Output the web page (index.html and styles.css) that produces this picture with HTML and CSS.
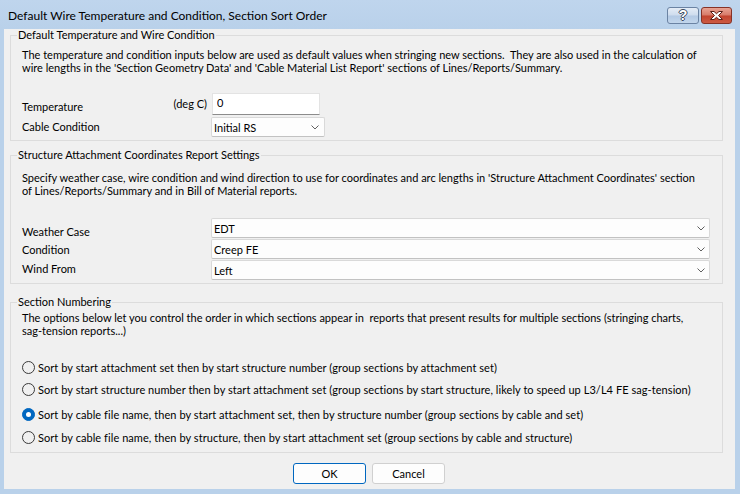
FILE: index.html
```html
<!DOCTYPE html>
<html>
<head>
<meta charset="UTF-8">
<title>Default Wire Temperature and Condition, Section Sort Order</title>
<link rel="stylesheet" href="styles.css">
</head>
<body>
<div class="window">
	<div class="titlebar">
		<div class="title">Default Wire Temperature and Condition, Section Sort Order</div>
		<div class="caption">
			<button class="cap cap-help">?</button>
			<button class="cap cap-close">
				<svg width="13" height="9" viewBox="0 0 13 9"><path d="M0.5 0.5h3.5l2.5 2.2l2.5-2.2h3.5l-4 4l4 4h-3.5l-2.5-2.2l-2.5 2.2h-3.5l4-4z" fill="#fff" stroke="#5a2018" stroke-width="1" stroke-linejoin="round"/></svg>
			</button>
		</div>
	</div>
	<div class="client">
		<fieldset class="group">
			<legend>Default Temperature and Wire Condition</legend>
			<p class="desc">The temperature and condition inputs below are used as default values when stringing new sections.&nbsp; They are also used in the calculation of<br>wire lengths in the 'Section Geometry Data' and 'Cable Material List Report' sections of Lines/Reports/Summary.</p>
			<div class="row row-temp">
				<div class="key"><span class="lbl pad-7">Temperature</span><span class="unit">(deg C)</span></div>
				<input class="edit" type="text" value="0">
			</div>
			<div class="row row-next">
				<div class="key"><span class="lbl pad-3">Cable Condition</span></div>
				<div class="combo combo-short"><span>Initial RS</span><svg class="chev" width="8" height="5" viewBox="0 0 8 5"><path d="M0.5 0.5l3.5 3.5l3.5-3.5" fill="none" stroke="#606060"/></svg></div>
			</div>
		</fieldset>

		<fieldset class="group group-coords">
			<legend>Structure Attachment Coordinates Report Settings</legend>
			<p class="desc">Specify weather case, wire condition and wind direction to use for coordinates and arc lengths in 'Structure Attachment Coordinates' section<br>of Lines/Reports/Summary and in Bill of Material reports.</p>
			<div class="row row-first">
				<div class="key"><span class="lbl pad-7">Weather Case</span></div>
				<div class="combo combo-wide"><span>EDT</span><svg class="chev" width="8" height="5" viewBox="0 0 8 5"><path d="M0.5 0.5l3.5 3.5l3.5-3.5" fill="none" stroke="#606060"/></svg></div>
			</div>
			<div class="row row-tight">
				<div class="key"><span class="lbl pad-4">Condition</span></div>
				<div class="combo combo-wide"><span>Creep FE</span><svg class="chev" width="8" height="5" viewBox="0 0 8 5"><path d="M0.5 0.5l3.5 3.5l3.5-3.5" fill="none" stroke="#606060"/></svg></div>
			</div>
			<div class="row row-tight">
				<div class="key"><span class="lbl pad-2">Wind From</span></div>
				<div class="combo combo-wide"><span>Left</span><svg class="chev" width="8" height="5" viewBox="0 0 8 5"><path d="M0.5 0.5l3.5 3.5l3.5-3.5" fill="none" stroke="#606060"/></svg></div>
			</div>
		</fieldset>

		<fieldset class="group group-order">
			<legend>Section Numbering</legend>
			<p class="desc">The options below let you control the order in which sections appear in&nbsp; reports that present results for multiple sections (stringing charts,<br>sag-tension reports...)</p>
			<div class="opt opt-1"><span class="radio"></span>Sort by start attachment set then by start structure number (group sections by attachment set)</div>
			<div class="opt opt-2"><span class="radio"></span>Sort by start structure number then by start attachment set (group sections by start structure, likely to speed up L3/L4 FE sag-tension)</div>
			<div class="opt opt-3"><span class="radio checked"></span>Sort by cable file name, then by start attachment set, then by structure number (group sections by cable and set)</div>
			<div class="opt opt-4"><span class="radio"></span>Sort by cable file name, then by structure, then by start attachment set (group sections by cable and structure)</div>
		</fieldset>

		<div class="actions">
			<button class="btn btn-default">OK</button>
			<button class="btn">Cancel</button>
		</div>
	</div>
</div>
</body>
</html>
```
FILE: styles.css
```css
*{box-sizing: border-box;}
body{margin: 0;font-family: Lato, "Liberation Sans", sans-serif;font-size: 11px;color: #000;}
.window{
	width: 740px;
	height: 494px;
	background: #b9d1ea;
	display: flex;
	flex-direction: column;
}
.titlebar{
	height: 29px;
	flex: none;
	display: flex;
	justify-content: space-between;
	align-items: flex-start;
	background: linear-gradient(#bfd5ed, #b9d1ea);
}
.title{
	font-size: 12px;
	line-height: 26px;
	padding: 3px 0 0 8px;
}
.caption{
	display: flex;
	gap: 2px;
	margin: 7px 8px 0 0;
}
.cap{
	height: 17px;
	padding: 0;
	border-radius: 3px;
	display: flex;
	align-items: center;
	justify-content: center;
}
.cap-help{
	width: 32px;
	border: 1px solid #6b83a3;
	background: linear-gradient(#e4ecf6, #cedcee 48%, #b3c9e4 52%, #c2d6ec);
	color: #fff;
	font: bold 14px "Liberation Sans", sans-serif;
	line-height: 15px;
	text-shadow: 1px 0 0 #3d4a5c, -1px 0 0 #3d4a5c, 0 1px 0 #3d4a5c, 0 -1px 0 #3d4a5c;
}
.cap-close{
	width: 31px;
	border: 1px solid #863226;
	background: linear-gradient(#e8a393, #d77a69 48%, #c2432e 52%, #cc5a43);
}
.client{
	flex: 1;
	margin: 0 5px 5px 4px;
	background: #f0f0f0;
	padding: 0 12px 0 6px;
}
.group{
	margin: 0;
	min-width: 0;
	border: 1px solid #dcdcdc;
	padding: 0 0 3px 11px;
}
.group legend{
	line-height: 12px;
	padding: 0 1px;
	margin-left: -5px;
}
.group-coords{margin-top: 8px;}
.group-order{margin-top: 12px;padding-bottom: 8px;}
.desc{
	margin: 7px 0 0;
	line-height: 13px;
}
.group-coords .desc{margin-top: 10px;}
.group-order .desc{margin-top: 3px;}

.row{
	display: flex;
	align-items: flex-start;
}
.row-temp{margin-top: 19px;}
.row-next{margin-top: 2px;}
.row-first{margin-top: 21px;}
.row-tight{margin-top: 1px;}
.key{
	width: 189px;
	flex: none;
	display: flex;
	justify-content: space-between;
	align-items: flex-start;
	line-height: 13px;
}
.pad-2{padding-top: 2px;}
.pad-3{padding-top: 3px;}
.pad-4{padding-top: 4px;}
.pad-7{padding-top: 7px;}
.unit{
	padding-top: 4px;
	margin-right: 4px;
}
.edit{
	width: 108px;
	height: 22px;
	margin-left: 1px;
	padding: 0 4px 3px;
	border: 1px solid #e3e3e3;
	border-bottom-color: #8c8c8c;
	background: #fff;
	font: inherit;
	outline: none;
}
.combo{
	height: 20px;
	display: flex;
	align-items: center;
	justify-content: space-between;
	padding: 0 5px 0 2px;
	border: 1px solid #d9d9d9;
	border-bottom-color: #c2c2c2;
	border-radius: 2px;
	background: #fdfdfd;
	line-height: 13px;
}
.combo-short{width: 114px;}
.combo-wide{width: 499px;padding-right: 4px;}

.opt{
	display: flex;
	align-items: center;
	gap: 3px;
	line-height: 13px;
	letter-spacing: 0.06px;
}
.opt-1{margin-top: 24px;}
.opt-2{margin-top: 9px;}
.opt-3{margin-top: 12px;}
.opt-4{margin-top: 10px;}
.radio{
	width: 13px;
	height: 13px;
	flex: none;
	border-radius: 50%;
	border: 1px solid #3a3a3a;
	display: flex;
	align-items: center;
	justify-content: center;
}
.radio.checked{
	border-color: #0067c0;
	background: #0067c0;
}
.radio.checked::after{
	content: "";
	width: 5px;
	height: 5px;
	border-radius: 50%;
	background: #fff;
}

.actions{
	display: flex;
	justify-content: center;
	gap: 6px;
	margin-top: 10px;
	padding-left: 5px;
}
.btn{
	width: 73px;
	height: 21px;
	padding: 0;
	border: 1px solid #d0d0d0;
	border-radius: 3px;
	background: #fdfdfd;
	font: inherit;
	color: #000;
}
.btn-default{border-color: #0067c0;}
```
